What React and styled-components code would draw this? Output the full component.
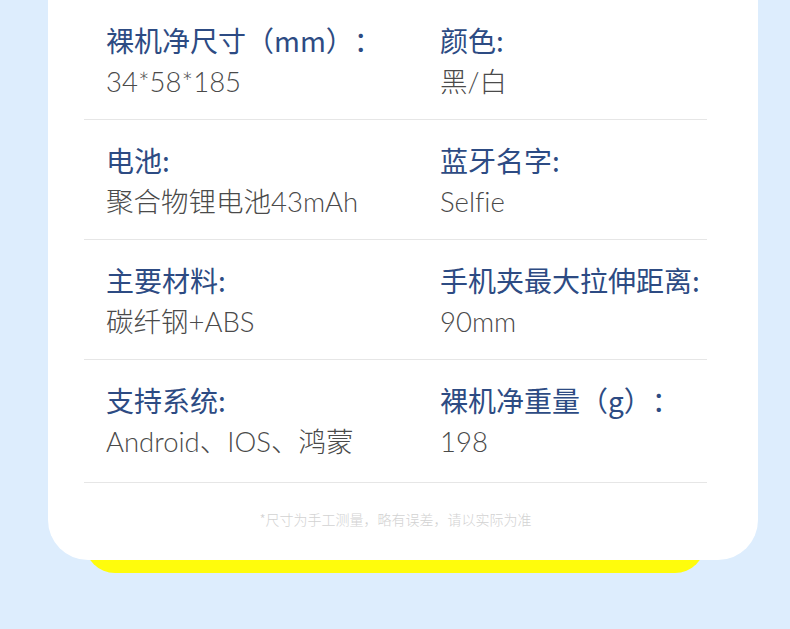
import React from "react";
import styled, { createGlobalStyle } from "styled-components";

const Global = createGlobalStyle`
  html, body { margin: 0; padding: 0; background: #ddedfd; }
  body { font-family: "Noto Sans CJK SC", "Noto Sans", sans-serif; }
`;

const Page = styled.div`
  width: 790px;
  height: 629px;
  overflow: hidden;
  background: #ddedfd;
`;

const Stack = styled.div`
  margin-left: 48px;
  width: 710px;
`;

const Card = styled.div`
  position: relative;
  z-index: 1;
  background: #ffffff;
  border-radius: 0 0 40px 40px;
  padding: 0 51px 31px 36px;
`;

const Row = styled.div`
  display: grid;
  grid-template-columns: 334px 1fr;
  box-sizing: border-box;
  height: ${(p) => (p.$last ? 123 : 120)}px;
  padding: 22px 0 0 22px;
  border-bottom: 1px solid #e6e6e6;
`;

const Cell = styled.div`
  display: flex;
  flex-direction: column;
  gap: 6px;
`;

const Label = styled.div`
  font-size: 28px;
  line-height: 36px;
  font-weight: 400;
  color: #2d4b83;
  white-space: nowrap;
  text-spacing-trim: space-all;
`;

const Value = styled.div`
  font-family: Lato, "Noto Sans CJK SC", sans-serif;
  font-size: 27.5px;
  line-height: 36px;
  font-weight: 300;
  color: #4a4a4a;
  white-space: nowrap;
  font-variant-ligatures: none;
  font-feature-settings: "liga" 0;
`;

const Note = styled.div`
  margin-top: 26px;
  font-size: 14px;
  line-height: 20px;
  font-weight: 300;
  color: #d2d2d2;
  text-align: center;
`;

const Ribbon = styled.div`
  margin: -47px 0 0 37px;
  width: 620px;
  height: 60px;
  border-radius: 30px;
  background: #fffc0c;
`;

const rows = [
  [
    ["裸机净尺寸（mm）：", "34*58*185"],
    ["颜色:", "黑/白"],
  ],
  [
    ["电池:", "聚合物锂电池43mAh"],
    ["蓝牙名字:", "Selfie"],
  ],
  [
    ["主要材料:", "碳纤钢+ABS"],
    ["手机夹最大拉伸距离:", "90mm"],
  ],
  [
    ["支持系统:", "Android、IOS、鸿蒙"],
    ["裸机净重量（g）：", "198"],
  ],
];

export default function App() {
  return (
    <Page>
      <Global />
      <Stack>
        <Card>
          {rows.map((r, i) => (
            <Row key={i} $last={i === rows.length - 1}>
              {r.map(([l, v], j) => (
                <Cell key={j}>
                  <Label>{l}</Label>
                  <Value>{v}</Value>
                </Cell>
              ))}
            </Row>
          ))}
          <Note>*尺寸为手工测量，略有误差，请以实际为准</Note>
        </Card>
        <Ribbon />
      </Stack>
    </Page>
  );
}
